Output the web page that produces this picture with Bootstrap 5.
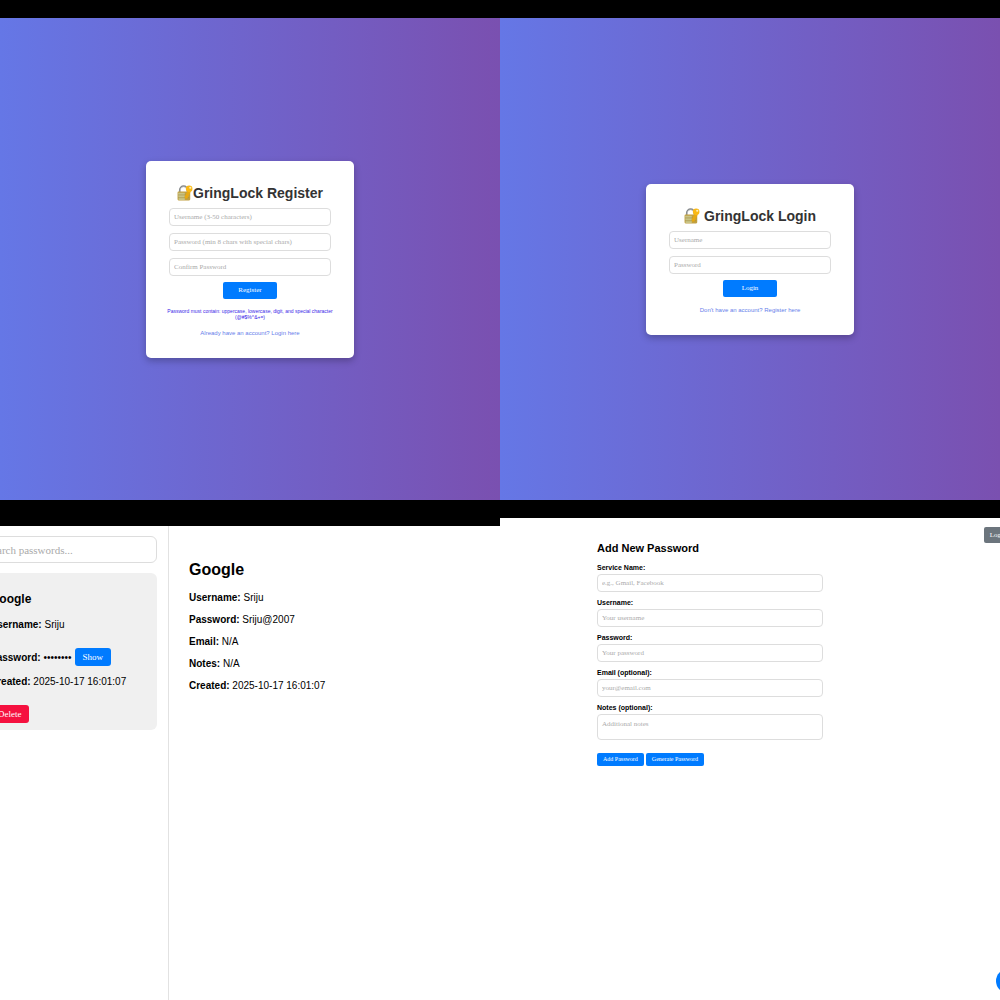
<!DOCTYPE html>
<html lang="en">
<head>
<meta charset="utf-8">
<meta name="viewport" content="width=device-width, initial-scale=1">
<title>GringLock</title>
<link href="https://cdn.jsdelivr.net/npm/bootstrap@5.3.0/dist/css/bootstrap.min.css" rel="stylesheet">
<style>
body { font-family: "Liberation Sans", Arial, sans-serif; color: #000; background: #fff; }
.screen { min-height: 50vh; }
.top-strip { height: 18px; background: #000; }
.top-strip-tall { height: 26px; }
.auth-bg { background: linear-gradient(90deg, #6577e6 0%, #7a50b0 100%); }
.auth-card { width: 208px; padding: 23px 14px 21px; border-radius: 5px; box-shadow: 0 3px 7px rgba(0,0,0,.25); }
.auth-title { font-size: 14px; line-height: 18px; font-weight: 700; color: #333; margin-bottom: 6px; }
.lock-icon { width: 16px; height: 16px; }
.auth-fields { width: 162px; gap: 7px; margin-bottom: 6px; }
.field { height: 18px; padding: 0 4px; font: 7px/12px "Liberation Serif", "Times New Roman", serif; border: 1px solid #ddd; border-radius: 4px; color: #333; }
.field::placeholder { color: #aaa; opacity: 1; }
.act { font: 7px/9px "Liberation Serif", "Times New Roman", serif; border: 0; border-radius: 2px; padding: 4px 6px; color: #fff; background: #007bff; }
.act-auth { width: 54px; }
.act-form { font-size: 6px; line-height: 7px; padding: 3px 6px; }
.act-side { font-size: 9px; line-height: 10px; padding: 4px 8px; border-radius: 3px; }
.act-delete { background: #f5113f; }
.hint { font-size: 5px; line-height: 6px; color: #3a1fe8; margin: 9px 0 0; }
.auth-link { font-size: 6px; line-height: 8px; color: #667eea; margin-top: 9px; text-decoration: none; }
.sidebar { width: 209px; margin-left: -40px; padding: 10px 11px; border-right: 1px solid #e2e2e2; }
.search { height: 27px; font-size: 11px; padding: 0 14px; border-radius: 6px; margin-bottom: 10px; border-color: #ddd; }
.entry { background: #f0f0f0; border-radius: 6px; padding: 18px 16px 7px 19px; font-size: 10px; line-height: 15px; }
.entry h2 { font-size: 12px; line-height: 16px; font-weight: 700; margin: 0 0 10px; }
.detail { padding: 34px 20px; font-size: 10px; line-height: 12px; }
.detail h1 { font-size: 16px; line-height: 20px; font-weight: 700; margin: 0 0 12px; }
.detail p { margin: 0 0 10px; }
.entry-line { margin: 0 0 16px; }
.entry-short { gap: 3px; margin: 0 0 8px; }
.add-form { width: 226px; margin-left: 97px; padding-top: 23px; }
.add-form h1 { font-size: 11px; line-height: 14px; font-weight: 700; margin: 0 0 8px; }
.add-form label { display: block; font-size: 7px; line-height: 9px; font-weight: 700; margin-bottom: 2px; }
.add-form .field { margin-bottom: 6px; }
.add-form .notes { height: 26px; padding-top: 3px; resize: none; margin-bottom: 13px; }
.form-actions { gap: 2px; }
.logout { top: 27px; right: -16px; background: #6c757d; line-height: 8px; }
.fab { width: 24px; height: 24px; right: -20px; bottom: 7px; background: #007bff; border: 0; color: #fff; font-size: 12px; line-height: 24px; }
</style>
<script src="https://cdn.jsdelivr.net/npm/bootstrap@5.3.0/dist/js/bootstrap.bundle.min.js"></script>
</head>
<body>
<svg class="d-none" aria-hidden="true">
  <symbol id="lock" viewBox="1 0 29 29">
    <path d="M6 15V9a7 7 0 0 1 14 0v6" fill="none" stroke="#85898c" stroke-width="3"/>
    <path d="M7 13V9a6 6 0 0 1 9-5" fill="none" stroke="#c9cccd" stroke-width="1"/>
    <rect x="2" y="12" width="23" height="16" rx="2" fill="#c2a040"/>
    <path d="M3 14h12v13H4z" fill="#c9c486"/>
    <path d="M3 18h20M3 23h20" stroke="#a08b3e" stroke-width="1"/>
    <path d="M21 9l-6 12 1 4 4-1 6-12z" fill="#e7a911"/>
    <circle cx="23" cy="7" r="6" fill="#f9b916"/>
    <circle cx="25" cy="5" r="2" fill="#fff0bd"/>
  </symbol>
</svg>
<main class="container-fluid p-0 overflow-hidden">
  <div class="row row-cols-2 g-0">
    <section class="col screen d-flex flex-column">
      <div class="top-strip"></div>
      <div class="auth-bg flex-grow-1 d-flex align-items-center justify-content-center">
        <form class="auth-card bg-white d-flex flex-column align-items-center text-center">
          <h1 class="auth-title d-flex align-items-center"><svg class="lock-icon" aria-hidden="true"><use href="#lock"/></svg>GringLock Register</h1>
          <div class="auth-fields d-flex flex-column">
            <input class="field w-100" type="text" placeholder="Username (3-50 characters)" aria-label="Username">
            <input class="field w-100" type="password" placeholder="Password (min 8 chars with special chars)" aria-label="Password">
            <input class="field w-100" type="password" placeholder="Confirm Password" aria-label="Confirm Password">
          </div>
          <button class="act act-auth" type="button">Register</button>
          <p class="hint">Password must contain: uppercase, lowercase, digit, and special character (@#$%^&amp;+=)</p>
          <a class="auth-link" href="#">Already have an account? Login here</a>
        </form>
      </div>
    </section>
    <section class="col screen d-flex flex-column">
      <div class="top-strip"></div>
      <div class="auth-bg flex-grow-1 d-flex align-items-center justify-content-center">
        <form class="auth-card bg-white d-flex flex-column align-items-center text-center">
          <h1 class="auth-title d-flex align-items-center gap-1"><svg class="lock-icon" aria-hidden="true"><use href="#lock"/></svg>GringLock Login</h1>
          <div class="auth-fields d-flex flex-column">
            <input class="field w-100" type="text" placeholder="Username" aria-label="Username">
            <input class="field w-100" type="password" placeholder="Password" aria-label="Password">
          </div>
          <button class="act act-auth" type="button">Login</button>
          <a class="auth-link" href="#">Don't have an account? Register here</a>
        </form>
      </div>
    </section>
    <section class="col screen d-flex flex-column overflow-hidden">
      <div class="top-strip top-strip-tall"></div>
      <div class="flex-grow-1 d-flex">
        <aside class="sidebar flex-shrink-0">
          <input class="field search d-block w-100" type="search" placeholder="Search passwords..." aria-label="Search passwords">
          <article class="entry">
            <h2>Google</h2>
            <p class="entry-line"><strong>Username:</strong> Sriju</p>
            <div class="entry-short d-flex align-items-center"><strong>Password:</strong><span>••••••••</span><button class="act act-side" type="button">Show</button></div>
            <p class="entry-line"><strong>Created:</strong> 2025-10-17 16:01:07</p>
            <button class="act act-side act-delete d-block" type="button">Delete</button>
          </article>
        </aside>
        <article class="detail flex-grow-1">
          <h1>Google</h1>
          <p><strong>Username:</strong> Sriju</p>
          <p><strong>Password:</strong> Sriju@2007</p>
          <p><strong>Email:</strong> N/A</p>
          <p><strong>Notes:</strong> N/A</p>
          <p><strong>Created:</strong> 2025-10-17 16:01:07</p>
        </article>
      </div>
    </section>
    <section class="col screen position-relative overflow-hidden">
      <div class="top-strip"></div>
      <form class="add-form">
        <h1>Add New Password</h1>
        <label for="service">Service Name:</label>
        <input class="field d-block w-100" id="service" type="text" placeholder="e.g., Gmail, Facebook">
        <label for="user">Username:</label>
        <input class="field d-block w-100" id="user" type="text" placeholder="Your username">
        <label for="pass">Password:</label>
        <input class="field d-block w-100" id="pass" type="password" placeholder="Your password">
        <label for="email">Email (optional):</label>
        <input class="field d-block w-100" id="email" type="email" placeholder="your@email.com">
        <label for="notes">Notes (optional):</label>
        <textarea class="field notes d-block w-100" id="notes" placeholder="Additional notes"></textarea>
        <div class="form-actions d-flex">
          <button class="act act-form" type="button">Add Password</button>
          <button class="act act-form" type="button">Generate Password</button>
        </div>
      </form>
      <button class="act logout position-absolute" type="button">Logout</button>
      <button class="fab position-absolute rounded-circle p-0" type="button" aria-label="Add password">+</button>
    </section>
  </div>
</main>
</body>
</html>
